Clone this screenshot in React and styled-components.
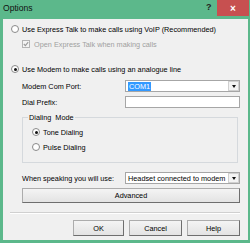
import React from "react";
import styled, { createGlobalStyle } from "styled-components";

const Global = createGlobalStyle`
  html, body { margin: 0; padding: 0; background: #fff; }
  body { font-family: "Liberation Sans", Arial, sans-serif; font-size: 7.3px; color: #000; }
`;

const Window = styled.div`
  width: 250px;
  height: 243px;
  background: #5cb88b;
  display: flex;
  flex-direction: column;
  box-sizing: border-box;
`;

const TitleBar = styled.div`
  height: 19px;
  display: flex;
  align-items: flex-start;
  flex-shrink: 0;
`;

const Title = styled.div`
  flex: 1;
  font-size: 8.6px;
  padding: 3px 0 0 3px;
  color: #111;
`;

const HelpGlyph = styled.div`
  font-size: 9px;
  font-weight: bold;
  color: #222;
  padding-top: 2px;
  width: 11px;
`;

const CloseBtn = styled.div`
  width: 32px;
  height: 16px;
  margin-right: 1px;
  background: #c75050;
  color: #fff;
  display: flex;
  align-items: center;
  justify-content: center;
  font-size: 10px;
  font-weight: bold;
`;

const Client = styled.div`
  flex: 1;
  margin: 0 2px 3px 3px;
  background: #f0f0f0;
  display: flex;
  flex-direction: column;
  padding-left: 8px;
  padding-right: 8px;
`;

const Row = styled.div`
  display: flex;
  align-items: center;
  height: ${(p) => p.$h || 10}px;
  margin-top: ${(p) => p.$top}px;
  padding-left: ${(p) => p.$indent || 0}px;
  color: ${(p) => (p.$disabled ? "#a0a0a0" : "#000")};
`;

const RadioCircle = styled.span`
  width: 8px;
  height: 8px;
  border-radius: 50%;
  border: 1px solid #8a8a8a;
  background: #fff;
  box-sizing: border-box;
  display: inline-flex;
  align-items: center;
  justify-content: center;
  margin-right: 3px;
  flex-shrink: 0;
  &::after {
    content: "";
    width: 3px;
    height: 3px;
    border-radius: 50%;
    background: ${(p) => (p.$checked ? "#111" : "transparent")};
  }
`;

const CheckBox = styled.span`
  width: 8px;
  height: 8px;
  border: 1px solid #b4b4b4;
  background: #f4f4f4;
  box-sizing: border-box;
  margin-right: 4px;
  display: inline-flex;
  align-items: center;
  justify-content: center;
  flex-shrink: 0;
`;

const FieldRow = styled.div`
  display: flex;
  align-items: center;
  margin-top: ${(p) => p.$top}px;
  padding-left: 11px;
`;

const FieldLabel = styled.div`
  width: 103px;
`;

const Box = styled.div`
  width: 115px;
  height: 12px;
  box-sizing: border-box;
  border: 1px solid #a6a6a6;
  background: #fff;
  display: flex;
  align-items: center;
  padding-left: 1px;
`;

const Selected = styled.span`
  background: #3399ff;
  color: #fff;
  padding: 0 1px;
  line-height: 9px;
`;

const ComboText = styled.span`
  flex: 1;
  padding-left: 1px;
  white-space: nowrap;
  overflow: hidden;
`;

const DropBtn = styled.div`
  width: 11px;
  height: 10px;
  margin-right: 0px;
  box-sizing: border-box;
  border: 1px solid #d0d0d0;
  background: #f3f3f3;
  display: flex;
  align-items: center;
  justify-content: center;
  &::after {
    content: "";
    border-left: 2.5px solid transparent;
    border-right: 2.5px solid transparent;
    border-top: 3px solid #111;
  }
`;

const Group = styled.div`
  position: relative;
  margin-top: 9px;
  margin-left: 11px;
  width: 216px;
  height: 46px;
  box-sizing: border-box;
  border: 1px solid #d5d9dd;
  padding: 5px 0 0 9px;
  display: flex;
  flex-direction: column;
`;

const GroupLabel = styled.span`
  position: absolute;
  top: -5px;
  left: 5px;
  background: #f0f0f0;
  padding: 0 1px;
  line-height: 9px;
  white-space: pre;
`;

const PushButton = styled.div`
  box-sizing: border-box;
  height: ${(p) => p.$h || 16}px;
  width: ${(p) => (p.$w ? `${p.$w}px` : "auto")};
  border: 1px solid #acacac;
  border-right-color: #6e6e6e;
  border-bottom-color: #6e6e6e;
  background: linear-gradient(#f4f4f4, #e3e3e3);
  display: flex;
  align-items: center;
  justify-content: center;
`;

const WideButtonRow = styled.div`
  margin-top: 4px;
  padding-left: 11px;
  display: flex;
  & > * { flex: 1; }
`;

const Separator = styled.div`
  margin-top: 9px;
  margin-left: -1px;
  height: 1px;
  background: #d0d0d0;
  border-bottom: 1px solid #ffffff;
`;

const ButtonBar = styled.div`
  margin-top: 6px;
  display: flex;
  justify-content: flex-end;
  gap: 5px;
`;

const Check = () => (
  <svg width="6" height="6" viewBox="0 0 6 6">
    <path d="M0.8 3 L2.4 4.6 L5.2 1.2" fill="none" stroke="#9a9a9a" strokeWidth="1.1" />
  </svg>
);

export default function App() {
  return (
    <>
      <Global />
      <Window>
        <TitleBar>
          <Title>Options</Title>
          <HelpGlyph>?</HelpGlyph>
          <CloseBtn>×</CloseBtn>
        </TitleBar>
        <Client>
          <Row $top={5}>
            <RadioCircle />
            Use Express Talk to make calls using VoIP (Recommended)
          </Row>
          <Row $top={5} $indent={11} $disabled>
            <CheckBox><Check /></CheckBox>
            Open Express Talk when making calls
          </Row>
          <Row $top={15}>
            <RadioCircle $checked />
            Use Modem to make calls using an analogue line
          </Row>
          <FieldRow $top={6}>
            <FieldLabel>Modem Com Port:</FieldLabel>
            <Box>
              <ComboText><Selected>COM1</Selected></ComboText>
              <DropBtn />
            </Box>
          </FieldRow>
          <FieldRow $top={4}>
            <FieldLabel>Dial Prefix:</FieldLabel>
            <Box />
          </FieldRow>
          <Group>
            <GroupLabel>Dialing  Mode</GroupLabel>
            <Row $top={4}>
              <RadioCircle $checked />
              Tone Dialing
            </Row>
            <Row $top={5}>
              <RadioCircle />
              Pulse Dialing
            </Row>
          </Group>
          <FieldRow $top={9}>
            <FieldLabel>When speaking you will use:</FieldLabel>
            <Box>
              <ComboText>Headset connected to modem</ComboText>
              <DropBtn />
            </Box>
          </FieldRow>
          <WideButtonRow>
            <PushButton $h={15}>Advanced</PushButton>
          </WideButtonRow>
          <Separator />
          <ButtonBar>
            <PushButton $w={51}>OK</PushButton>
            <PushButton $w={53}>Cancel</PushButton>
            <PushButton $w={53}>Help</PushButton>
          </ButtonBar>
        </Client>
      </Window>
    </>
  );
}
